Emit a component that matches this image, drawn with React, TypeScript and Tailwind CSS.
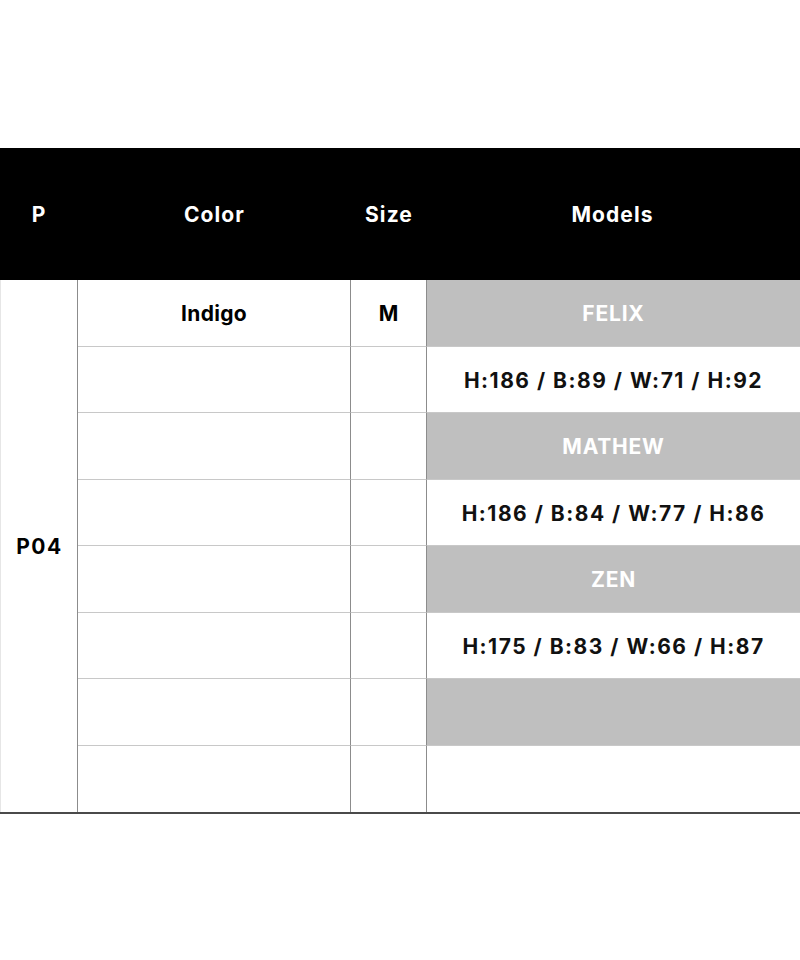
import React from "react";

const rows: { color: string; size: string; model: string; gray: boolean }[] = [
  { color: "Indigo", size: "M", model: "FELIX", gray: true },
  { color: "", size: "", model: "H:186 / B:89 / W:71 / H:92", gray: false },
  { color: "", size: "", model: "MATHEW", gray: true },
  { color: "", size: "", model: "H:186 / B:84 / W:77 / H:86", gray: false },
  { color: "", size: "", model: "ZEN", gray: true },
  { color: "", size: "", model: "H:175 / B:83 / W:66 / H:87", gray: false },
  { color: "", size: "", model: "", gray: true },
  { color: "", size: "", model: "", gray: false },
];

export default function App() {
  return (
    <div
      className="w-[800px] h-[960px] bg-white pt-[148px]"
      style={{ fontFamily: 'Inter, "Liberation Sans", Arial, sans-serif' }}
    >
      <div className="h-[132px] pt-[2px] bg-black grid grid-cols-[78px_273px_76px_1fr] items-center text-white font-bold text-[21px] tracking-[1.1px]">
        <div className="text-center">P</div>
        <div className="text-center">Color</div>
        <div className="text-center">Size</div>
        <div className="text-center pr-[2px]">Models</div>
      </div>
      <div className="grid grid-cols-[78px_273px_76px_1fr] grid-rows-[repeat(8,66.5px)] border-b-2 border-[#4a4a4a] font-bold text-[21px] text-black">
        <div className="row-span-8 col-start-1 row-start-1 border-r border-l border-l-[#e6e6e6] border-r-[#8c8c8c] flex items-center justify-center tracking-[1.5px] pl-[1px] pt-[2px]">
          P04
        </div>
        {rows.map((r, i) => {
          const last = i === rows.length - 1;
          const bb = last ? "" : "border-b border-b-[#c8c8c8]";
          return (
            <React.Fragment key={i}>
              <div
                className={`col-start-2 border-r border-r-[#8c8c8c] ${bb} flex items-center justify-center pt-[2px] tracking-[0.3px]`}
                style={{ gridRowStart: i + 1 }}
              >
                {r.color}
              </div>
              <div
                className={`col-start-3 border-r border-r-[#8c8c8c] ${bb} flex items-center justify-center pt-[2px]`}
                style={{ gridRowStart: i + 1 }}
              >
                {r.size}
              </div>
              <div
                className={`col-start-4 ${bb} flex items-center justify-center pt-[2px] ${
                  r.gray ? "bg-[#bfbfbf] text-white tracking-[0.8px]" : "text-[#111] tracking-[1.5px]"
                }`}
                style={{ gridRowStart: i + 1 }}
              >
                {r.model}
              </div>
            </React.Fragment>
          );
        })}
      </div>
    </div>
  );
}
